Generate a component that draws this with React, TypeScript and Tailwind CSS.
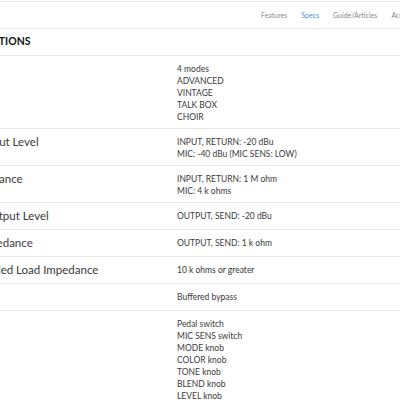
const navItems = [
  { label: "Features", active: false },
  { label: "Specs", active: true },
  { label: "Guide/Articles", active: false },
  { label: "Accessories", active: false },
];

const specs: { label: string; values: string[]; hide?: boolean }[] = [
  { label: "Variations", values: ["4 modes", "ADVANCED", "VINTAGE", "TALK BOX", "CHOIR"], hide: true },
  {
    label: "Nominal Input Level",
    values: ["INPUT, RETURN: -20 dBu", "MIC: -40 dBu (MIC SENS: LOW)"],
  },
  { label: "Input Impedance", values: ["INPUT, RETURN: 1 M ohm", "MIC: 4 k ohms"] },
  { label: "Nominal Output Level", values: ["OUTPUT, SEND: -20 dBu"] },
  { label: "Output Impedance", values: ["OUTPUT, SEND: 1 k ohm"] },
  { label: "Recommended Load Impedance", values: ["10 k ohms or greater"] },
  { label: "Bypass", values: ["Buffered bypass"], hide: true },
  {
    label: "Controls",
    values: [
      "Pedal switch",
      "MIC SENS switch",
      "MODE knob",
      "COLOR knob",
      "TONE knob",
      "BLEND knob",
      "LEVEL knob",
      "MIX knob",
    ],
    hide: true,
  },
];

export default function App() {
  return (
    <div
      className="w-[400px] h-[400px] overflow-hidden bg-white text-[#333]"
      style={{ fontFamily: "Lato, 'Open Sans', sans-serif" }}
    >
      {/* Sub navigation */}
      <nav className="mt-px h-[28px] border-y border-[#e6e6e6] flex items-center pl-[261px] gap-[14px] whitespace-nowrap">
        {navItems.map((n) => (
          <span
            key={n.label}
            className={
              "text-[7px] " + (n.active ? "text-[#4a8fe0]" : "text-[#8a8a8a]")
            }
          >
            {n.label}
          </span>
        ))}
      </nav>

      {/* Specs table, scrolled horizontally */}
      <div className="ml-[-62px] w-[462px]">
        <h2 className="h-[27px] flex items-center font-bold text-[10.5px] border-b border-[#e6e6e6] text-[#111] pl-[10px]">
          SPECIFICATIONS
        </h2>
        {specs.map((s) => (
          <div key={s.label} className="flex items-start border-b border-[#e6e6e6]">
            <div
              className={
                "w-[239px] shrink-0 pt-[5px] pb-[5px] leading-[16px] text-[11.5px] whitespace-nowrap " +
                (s.hide ? "text-transparent" : "text-[#3a3a3a]")
              }
            >
              {s.label}
            </div>
            <div className="pt-[7px] pb-[5px] text-[8.5px] leading-[12px] text-[#3a3a3a]">
              {s.values.map((v) => (
                <div key={v}>{v}</div>
              ))}
            </div>
          </div>
        ))}
      </div>
    </div>
  );
}
